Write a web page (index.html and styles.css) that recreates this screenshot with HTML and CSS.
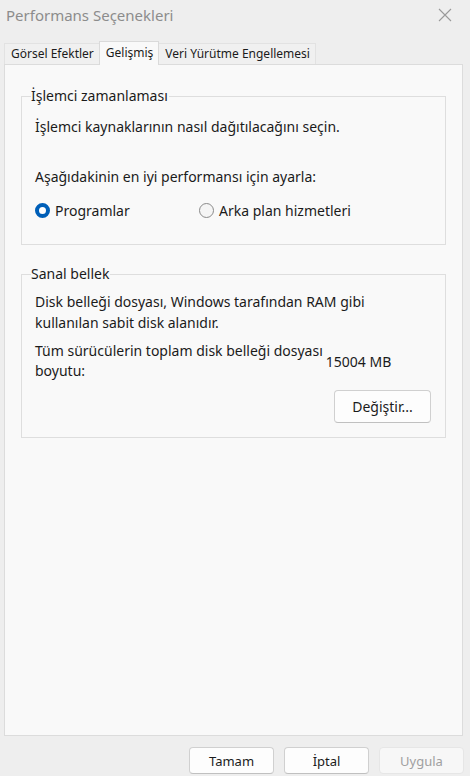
FILE: index.html
```html
<!DOCTYPE html>
<html lang="tr">
<head>
    <meta charset="UTF-8">
    <title>Performans Seçenekleri</title>
    <link rel="stylesheet" href="styles.css">
</head>
<body>
    <div class="titlebar">
        <span class="title">Performans Seçenekleri</span>
        <svg class="close" width="14" height="14" viewBox="0 0 14 14">
            <path d="M1 1 L13 13 M13 1 L1 13" stroke="#9a9a9a" stroke-width="1.1" fill="none"/>
        </svg>
    </div>

    <div class="tabs">
        <div class="tab">Görsel Efektler</div>
        <div class="tab active">Gelişmiş</div>
        <div class="tab">Veri Yürütme Engellemesi</div>
    </div>

    <div class="panel">
        <fieldset class="group">
            <legend>İşlemci zamanlaması</legend>
            <p class="line first">İşlemci kaynaklarının nasıl dağıtılacağını seçin.</p>
            <p class="line adjust">Aşağıdakinin en iyi performansı için ayarla:</p>
            <div class="radios">
                <label class="radio"><span class="dot checked"></span>Programlar</label>
                <label class="radio"><span class="dot"></span>Arka plan hizmetleri</label>
            </div>
        </fieldset>

        <fieldset class="group memory">
            <legend>Sanal bellek</legend>
            <p class="line first">Disk belleği dosyası, Windows tarafından RAM gibi<br>kullanılan sabit disk alanıdır.</p>
            <div class="total">
                <p class="line">Tüm sürücülerin toplam disk belleği dosyası<br>boyutu:</p>
                <span class="size">15004 MB</span>
            </div>
            <div class="actions">
                <button class="btn change">Değiştir...</button>
            </div>
        </fieldset>
    </div>

    <div class="footer">
        <button class="btn">Tamam</button>
        <button class="btn">İptal</button>
        <button class="btn disabled">Uygula</button>
    </div>
</body>
</html>
```

FILE: styles.css
```css
body {
    margin: 0;
    width: 470px;
    height: 776px;
    background-color: #eeeeee;
    font-family: "Noto Sans", "Open Sans", sans-serif;
    color: #1b1b1b;
    overflow: hidden;
}
.titlebar {
    height: 30px;
    display: flex;
    align-items: center;
    justify-content: space-between;
    padding: 0 18px 0 6px;
}
.title {
    font-size: 15px;
    color: #8c8c8c;
}
.close {
    display: block;
}
.tabs {
    display: flex;
    align-items: flex-end;
    height: 34px;
    padding-left: 4px;
}
.tab {
    font-size: 12px;
    height: 20px;
    line-height: 20px;
    padding: 0 5px 0 6px;
    background-color: #f0f0f0;
    border: 1px solid #e2e2e2;
    border-bottom: none;
    margin-right: -1px;
}
.tab.active {
    height: 23px;
    line-height: 22px;
    padding: 0 5px 0 6px;
    background-color: #f9f9f9;
    border-color: #dadada;
    position: relative;
    z-index: 1;
    margin-bottom: -1px;
}
.panel {
    width: 459px;
    height: 672px;
    margin-left: 4px;
    background-color: #f9f9f9;
    border: 1px solid #dcdcdc;
    padding-top: 22px;
    box-sizing: border-box;
}
.group {
    margin: 0 16px 0 16px;
    padding: 0 13px 0 13px;
    border: 1px solid #dedede;
    height: 158px;
    box-sizing: border-box;
}
.group legend {
    font-size: 14px;
    padding: 0 1px 0 0;
    margin-left: -4px;
    line-height: 18px;
}
.line {
    font-size: 14px;
    line-height: 20px;
    margin: 0;
}
.first {
    margin-top: 12px;
}
.adjust {
    margin-top: 30px;
}
.radios {
    display: flex;
    margin-top: 14px;
}
.radio {
    display: flex;
    align-items: center;
    font-size: 14px;
    width: 164px;
}
.dot {
    width: 15px;
    height: 15px;
    border-radius: 50%;
    border: 1px solid #8a8a8a;
    background-color: #f5f5f5;
    box-sizing: border-box;
    margin-right: 5px;
}
.dot.checked {
    border: 4.5px solid #005fb8;
    background-color: #fff;
}
.memory {
    margin-top: 20px;
    height: 173px;
}
.memory .first {
    margin-top: 8px;
    line-height: 21px;
}
.total {
    display: flex;
    align-items: center;
    margin-top: 8px;
}
.size {
    font-size: 14px;
    margin-left: 3px;
}
.actions {
    display: flex;
    justify-content: flex-end;
    margin-top: 9px;
    margin-right: 1px;
}
.btn {
    font-family: inherit;
    font-size: 13px;
    color: #1b1b1b;
    background-color: #fdfdfd;
    border: 1px solid #d0d0d0;
    border-bottom-color: #c0c0c0;
    border-radius: 4px;
    height: 27px;
    width: 85px;
    padding: 0;
}
.btn.change {
    width: 97px;
    height: 33px;
    font-size: 14px;
}
.footer {
    display: flex;
    justify-content: flex-end;
    gap: 10px;
    padding: 11px 6px 0 0;
}
.btn.disabled {
    color: #a0a0a0;
    background-color: #f7f7f7;
    border-color: #e6e6e6;
}
```
